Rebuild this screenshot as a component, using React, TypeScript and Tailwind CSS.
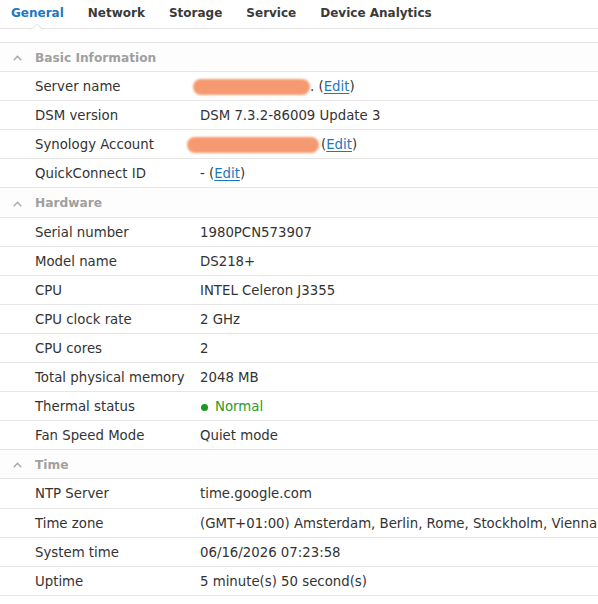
import { ReactNode } from 'react';

type Row = { label: string; value: ReactNode };
type Section = { title: string; rows: Row[] };

function EditLink() {
  return <span className="text-[#1b78c2] underline underline-offset-2">Edit</span>;
}

function Redacted({ width, offset }: { width: number; offset: string }) {
  return (
    <span
      className={`inline-block h-[16px] rounded-full bg-[#f59a70] blur-[0.8px] align-middle ${offset}`}
      style={{ width }}
    />
  );
}

const sections: Section[] = [
  {
    title: 'Basic Information',
    rows: [
      {
        label: 'Server name',
        value: (
          <span className="flex items-center">
            <Redacted width={117} offset="-ml-[7px]" />
            <span>. (</span>
            <EditLink />
            <span>)</span>
          </span>
        ),
      },
      { label: 'DSM version', value: 'DSM 7.3.2-86009 Update 3' },
      {
        label: 'Synology Account',
        value: (
          <span className="flex items-center">
            <Redacted width={132} offset="-ml-[13px] mr-[2px]" />
            <span>(</span>
            <EditLink />
            <span>)</span>
          </span>
        ),
      },
      {
        label: 'QuickConnect ID',
        value: (
          <span>
            - (<EditLink />)
          </span>
        ),
      },
    ],
  },
  {
    title: 'Hardware',
    rows: [
      { label: 'Serial number', value: '1980PCN573907' },
      { label: 'Model name', value: 'DS218+' },
      { label: 'CPU', value: 'INTEL Celeron J3355' },
      { label: 'CPU clock rate', value: '2 GHz' },
      { label: 'CPU cores', value: '2' },
      { label: 'Total physical memory', value: '2048 MB' },
      {
        label: 'Thermal status',
        value: (
          <span className="flex items-center gap-[7px] text-[#2a9a2a]">
            <span className="ml-[1px] h-[7px] w-[7px] rounded-full bg-[#1f961f]" />
            Normal
          </span>
        ),
      },
      { label: 'Fan Speed Mode', value: 'Quiet mode' },
    ],
  },
  {
    title: 'Time',
    rows: [
      { label: 'NTP Server', value: 'time.google.com' },
      { label: 'Time zone', value: '(GMT+01:00) Amsterdam, Berlin, Rome, Stockholm, Vienna' },
      { label: 'System time', value: '06/16/2026 07:23:58' },
      { label: 'Uptime', value: '5 minute(s) 50 second(s)' },
    ],
  },
];

const tabs = ['General', 'Network', 'Storage', 'Service', 'Device Analytics'];

export default function App() {
  return (
    <div
      className="w-[598px] h-[604px] overflow-hidden bg-white text-[13.3px] text-[#333]"
      style={{ fontFamily: '"DejaVu Sans", Verdana, sans-serif' }}
    >
      {/* tabs */}
      <div className="relative h-[29px] border-b border-[#e3e3e3]">
        <div className="flex h-[25px] items-center gap-6 pl-[11px] text-[12px] font-bold text-[#3a3a3a]">
          {tabs.map((t, i) => (
            <span key={t} className={i === 0 ? 'text-[#1b78c2]' : ''}>
              {t}
            </span>
          ))}
        </div>
        <svg className="absolute left-[31px] top-[24px]" width="12" height="6" viewBox="0 0 12 6">
          <polygon points="0,6 6,0.5 12,6" fill="#fff" />
          <polyline points="0,5.5 6,0.5 12,5.5" fill="none" stroke="#e0e0e0" strokeWidth="1" />
        </svg>
      </div>

      <div className="mt-[13px] border-t border-[#e6e6e6]">
        {sections.map((s) => (
          <div key={s.title}>
            <div className="flex h-[29.1px] items-center border-b border-[#e6e6e6] bg-[#fdfdfd] pt-[2px]">
              <svg className="ml-[13px] mr-[13px]" width="9" height="6" viewBox="0 0 9 6">
                <polyline points="0.8,5.2 4.5,1.2 8.2,5.2" fill="none" stroke="#a8a8a8" strokeWidth="1.4" />
              </svg>
              <span className="text-[12.2px] font-bold text-[#a0a0a0]">{s.title}</span>
            </div>
            {s.rows.map((r) => (
              <div key={r.label} className="flex h-[29.1px] items-center border-b border-[#e6e6e6] pt-[2px]">
                <span className="w-[200px] shrink-0 pl-[35px]">{r.label}</span>
                <span className="whitespace-nowrap">{r.value}</span>
              </div>
            ))}
          </div>
        ))}
      </div>
    </div>
  );
}
